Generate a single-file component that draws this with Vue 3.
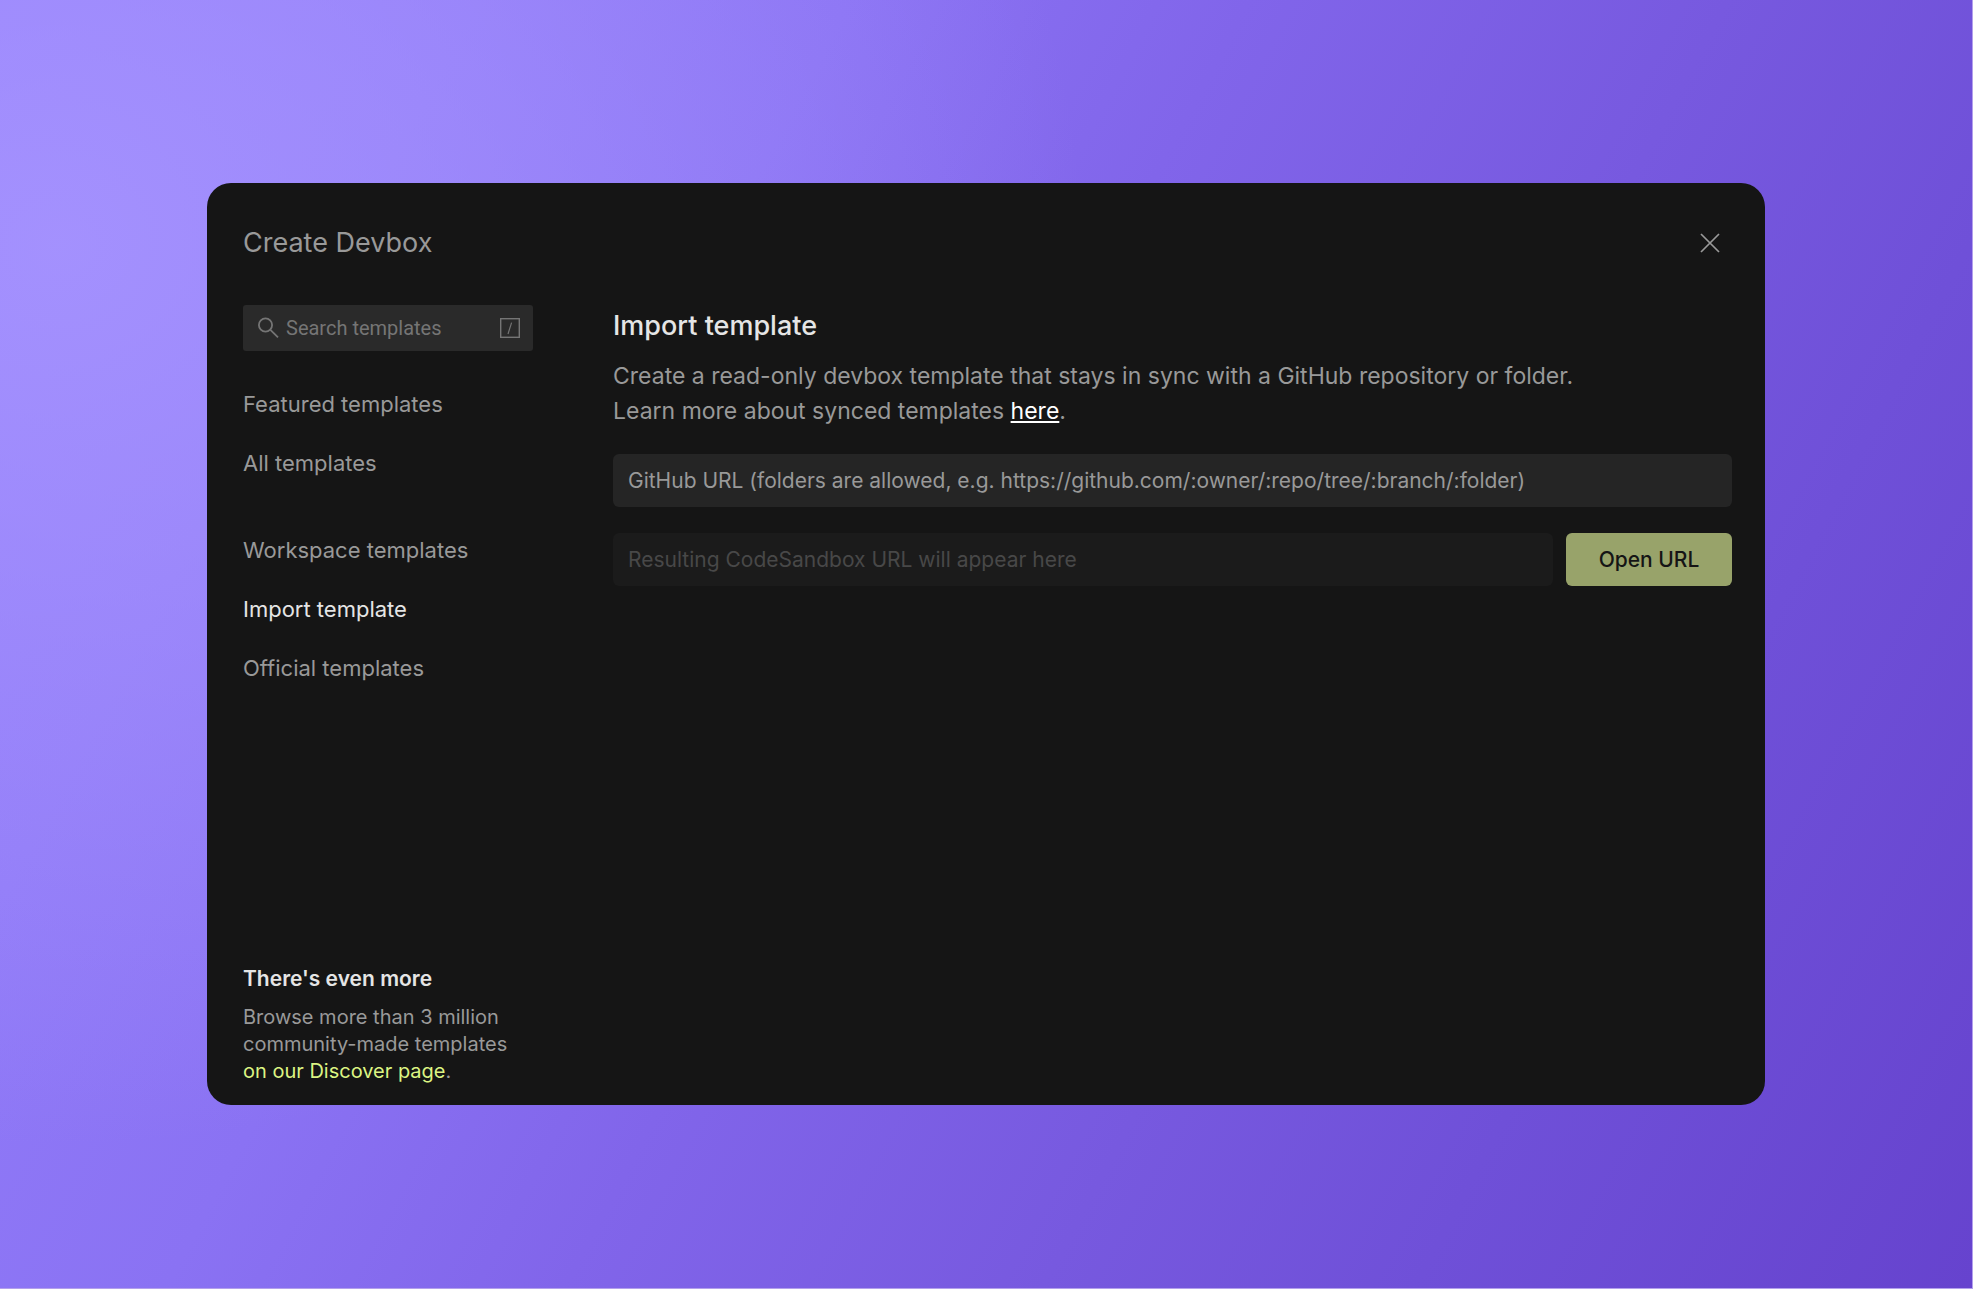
<script setup>
import { ref } from 'vue'

const primaryLinks = ['Featured templates', 'All templates']
const workspaceLinks = ['Workspace templates', 'Import template', 'Official templates']
const active = ref('Import template')
const query = ref('')
const sourceUrl = ref('')
</script>

<template>
  <div class="page">
    <section class="modal" role="dialog" aria-labelledby="modal-title">
      <header class="modal-header">
        <h1 id="modal-title" class="modal-title">Create Devbox</h1>
        <button class="close" type="button" aria-label="Close">
          <svg width="20" height="20" viewBox="0 0 20 20" fill="none" stroke="currentColor" stroke-width="1.7">
            <path d="M1 1L19 19M19 1L1 19" />
          </svg>
        </button>
      </header>

      <div class="modal-body">
        <aside class="sidebar">
          <label class="search">
            <svg class="search-icon" width="22" height="22" viewBox="0 0 22 22" fill="none" stroke="currentColor" stroke-width="1.8">
              <circle cx="8.5" cy="8" r="6.6" />
              <path d="M13.2 12.7L21 20.3" />
            </svg>
            <input v-model="query" class="search-input" type="text" placeholder="Search templates" aria-label="Search templates" />
            <svg class="key-icon" width="20" height="20" viewBox="0 0 20 20" fill="none" stroke="currentColor">
              <rect x="0.7" y="0.7" width="18.6" height="18.6" stroke-width="1.4" />
              <path d="M8 16L11.6 4.6" stroke-width="1.2" />
            </svg>
          </label>

          <nav class="nav" aria-label="Templates">
            <ul class="nav-group">
              <li v-for="item in primaryLinks" :key="item">
                <a href="#" class="nav-link" :class="{ active: item === active }" @click.prevent="active = item">{{ item }}</a>
              </li>
            </ul>
            <ul class="nav-group">
              <li v-for="item in workspaceLinks" :key="item">
                <a href="#" class="nav-link" :class="{ active: item === active }" @click.prevent="active = item">{{ item }}</a>
              </li>
            </ul>
          </nav>

          <footer class="more">
            <h2 class="more-title">There's even more</h2>
            <p class="more-text">
              Browse more than 3 million<br />community-made templates<br /><a href="#" class="discover">on our Discover page</a>.
            </p>
          </footer>
        </aside>

        <main class="content">
          <h2 class="content-title">Import template</h2>
          <p class="lead">
            Create a read-only devbox template that stays in sync with a GitHub repository or folder.<br />
            Learn more about synced templates <a href="#" class="here">here</a>.
          </p>
          <form class="form" @submit.prevent>
            <input
              v-model="sourceUrl"
              class="field"
              type="text"
              aria-label="GitHub URL"
              placeholder="GitHub URL (folders are allowed, e.g. https://github.com/:owner/:repo/tree/:branch/:folder)"
            />
            <div class="result">
              <input class="field" type="text" disabled aria-label="CodeSandbox URL" placeholder="Resulting CodeSandbox URL will appear here" />
              <button class="open" type="submit">Open URL</button>
            </div>
          </form>
        </main>
      </div>
    </section>
  </div>
</template>

<style>
body {
  margin: 0;
}
</style>

<style scoped>
.page {
  box-sizing: border-box;
  min-height: 100vh;
  display: flex;
  padding: 183px 207px;
  border: solid #b3a0ec;
  border-width: 0 1px 1px 0;
  background:
    radial-gradient(ellipse 52% 70% at 3% 19%, rgba(168, 150, 255, 0.8) 0%, rgba(168, 150, 255, 0.55) 35%, rgba(168, 150, 255, 0) 100%),
    linear-gradient(118deg, #937efb 0%, #8f79f7 18%, #8a72f3 32%, #8165ea 47%, #7759df 65%, #6f50d8 79%, #6643ce 100%);
  font-family: Inter, "Liberation Sans", sans-serif;
  color: #999;
}

.modal {
  box-sizing: border-box;
  flex: 1;
  display: flex;
  flex-direction: column;
  padding: 36px 33px 20px 36px;
  border-radius: 24px;
  background: #151515;
}

h1,
h2,
p,
ul {
  margin: 0;
  padding: 0;
  font-weight: 400;
}

.modal-header {
  display: flex;
  align-items: center;
  justify-content: space-between;
  height: 48px;
  padding-right: 12px;
}

.modal-title {
  font-size: 27px;
  line-height: 36px;
}

.close {
  display: flex;
  padding: 0;
  border: 0;
  background: none;
  color: #999;
}

.modal-body {
  flex: 1;
  display: flex;
  gap: 80px;
  padding-top: 38px;
}

.sidebar {
  flex: none;
  width: 290px;
  display: flex;
  flex-direction: column;
}

.search {
  display: flex;
  align-items: center;
  gap: 7px;
  height: 46px;
  padding: 0 13px 0 14px;
  box-sizing: border-box;
  border-radius: 3px;
  background: #2a2a2a;
  color: #757575;
}

.search-icon,
.key-icon {
  flex: none;
}

.search-input {
  flex: 1;
  min-width: 0;
  padding: 0;
  border: 0;
  outline: 0;
  background: none;
  color: #e5e5e5;
  font: 20px Roboto, sans-serif;
}

.search-input::placeholder {
  color: #757575;
}

.nav {
  flex: 1;
  display: flex;
  flex-direction: column;
  gap: 28px;
  padding-top: 24px;
}

.nav-group {
  list-style: none;
}

.nav-link {
  display: block;
  font-size: 22px;
  line-height: 59px;
  color: #999;
  text-decoration: none;
}

.nav-link.active {
  color: #e5e5e5;
}

.more-title {
  margin-bottom: 12px;
  font-size: 21px;
  font-weight: 600;
  line-height: 27px;
  color: #e5e5e5;
}

.more-text {
  font-size: 20px;
  line-height: 27px;
}

.discover {
  color: #dcf483;
  text-decoration: none;
}

.content {
  flex: 1;
  min-width: 0;
}

.content-title {
  font-size: 27px;
  font-weight: 500;
  line-height: 42px;
  margin-bottom: 12px;
  color: #e5e5e5;
}

.lead {
  font-size: 23px;
  line-height: 35px;
}

.here {
  color: #fff;
}

.form {
  display: flex;
  flex-direction: column;
  gap: 26px;
  margin-top: 25px;
}

.result {
  display: flex;
  gap: 13px;
}

.field {
  box-sizing: border-box;
  flex: 1;
  min-width: 0;
  height: 53px;
  padding: 0 15px;
  border: 0;
  border-radius: 6px;
  background: #252525;
  color: #e5e5e5;
  font: 21px Inter, "Liberation Sans", sans-serif;
}

.form > .field {
  flex: none;
}

.field::placeholder {
  color: #999;
}

.field:disabled {
  background: #1b1b1b;
}

.field:disabled::placeholder {
  color: #484848;
}

.open {
  flex: none;
  width: 166px;
  padding: 0;
  border: 0;
  border-radius: 6px;
  background: #98a36a;
  color: #151515;
  font: 500 21px Inter, "Liberation Sans", sans-serif;
}
</style>
